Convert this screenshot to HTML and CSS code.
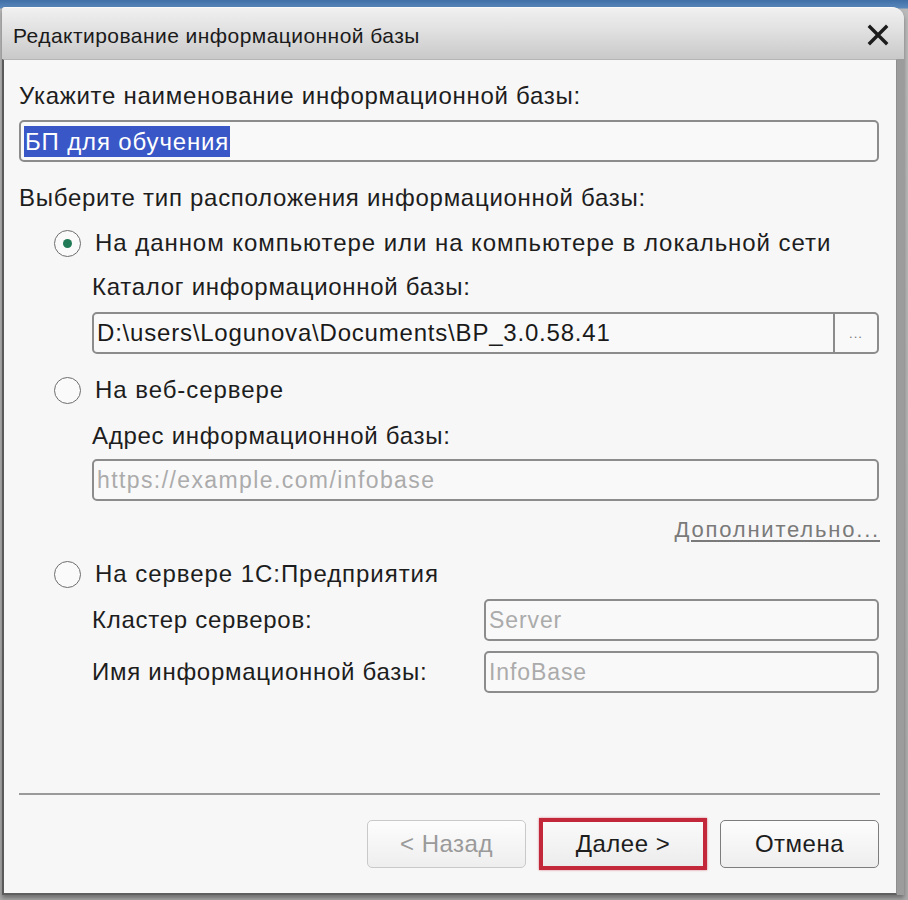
FILE: index.html
```html
<!DOCTYPE html>
<html lang="ru">
<head>
<meta charset="utf-8">
<title>Редактирование информационной базы</title>
<link rel="stylesheet" href="styles.css">
</head>
<body>
<div class="desktop">
  <div class="window">
    <div class="titlebar">
      <span class="title">Редактирование информационной базы</span>
      <svg class="close" width="22" height="22" viewBox="0 0 22 22"><path d="M3 3 L19 19 M19 3 L3 19" stroke="#1c1c1c" stroke-width="3.4" stroke-linecap="square"/></svg>
    </div>
    <div class="frame">
      <div class="content">
        <div class="label l1">Укажите наименование информационной базы:</div>
        <div class="field f1"><span class="sel">БП для обучения</span></div>
        <div class="label l2">Выберите тип расположения информационной базы:</div>

        <div class="radio r1"><span class="dot checked"></span><span class="rtext">На данном компьютере или на компьютере в локальной сети</span></div>
        <div class="sub">
          <div class="label l3">Каталог информационной базы:</div>
          <div class="field f2"><span class="value">D:\users\Logunova\Documents\BP_3.0.58.41</span><span class="choose">...</span></div>
        </div>

        <div class="radio r2"><span class="dot"></span><span class="rtext">На веб-сервере</span></div>
        <div class="sub">
          <div class="label l4">Адрес информационной базы:</div>
          <div class="field f3"><span class="ph">https://example.com/infobase</span></div>
          <div class="more"><span class="link">Дополнительно...</span></div>
        </div>

        <div class="radio r3"><span class="dot"></span><span class="rtext">На сервере 1С:Предприятия</span></div>
        <div class="sub grid">
          <div class="label">Кластер серверов:</div>
          <div class="field small"><span class="ph">Server</span></div>
          <div class="label">Имя информационной базы:</div>
          <div class="field small"><span class="ph">InfoBase</span></div>
        </div>

        <div class="footer">
          <div class="sep"></div>
          <div class="buttons">
            <div class="btn disabled">&lt; Назад</div>
            <div class="btn primary">Далее &gt;</div>
            <div class="btn">Отмена</div>
          </div>
        </div>
      </div>
    </div>
  </div>
</div>
</body>
</html>
```
FILE: styles.css
```css
html, body {
  margin: 0;
  padding: 0;
}
body {
  width: 908px;
  height: 900px;
  overflow: hidden;
  font-family: "Liberation Sans", Arial, sans-serif;
}
.desktop {
  width: 908px;
  height: 900px;
  background: linear-gradient(#3f6fa6 0, #5a88bd 8px, #b9b9b9 9px, #a9a9a9 100%);
  padding-top: 7px;
  box-sizing: border-box;
}
.window {
  margin-left: 2px;
  width: 902px;
  height: 888px;
  display: flex;
  flex-direction: column;
  border-radius: 3px 12px 0 0;
  background: #a6a6a6;
  box-shadow: 0 3px 4px rgba(0,0,0,0.35);
}
.titlebar {
  height: 51px;
  flex: none;
  display: flex;
  align-items: center;
  justify-content: space-between;
  padding: 0 15px 0 11px;
  border-radius: 3px 12px 0 0;
  background: linear-gradient(#f0f0f0 0%, #e2e2e2 40%, #c9c9c9 100%);
  border-top: 1px solid #fafafa;
}
.title {
  font-family: "Liberation Sans", Arial, sans-serif;
  font-size: 21px;
  color: #1a1a1a;
  letter-spacing: 0.45px;
  margin-top: 5px;
}
.close {
  display: block;
  margin-top: 2px;
}
.frame {
  flex: 1;
  display: flex;
  padding: 0 7px 0 0;
  background: linear-gradient(90deg, #c2c2c2, #9c9c9c);
}
.content {
  flex: 1;
  display: flex;
  flex-direction: column;
  background: #f7f7f7;
  border-left: 2px solid #5a5a5a;
  border-bottom: 2px solid #5f5f5f;
  border-right: 1px solid #8e8e8e;
  border-top: 1px solid #b5b5b5;
  padding: 21px 17px 23px 15px;
  color: #1d1d1d;
}
.label {
  font-size: 24px;
  line-height: 30px;
  height: 30px;
  letter-spacing: 0.72px;
  white-space: nowrap;
}
.field {
  height: 42px;
  box-sizing: border-box;
  border: 2px solid #8c8c8c;
  border-radius: 5px;
  background: #f9f9f9;
  display: flex;
  align-items: center;
  padding-left: 3px;
  font-size: 24px;
  white-space: nowrap;
}
.f1 { margin-top: 9px; }
.sel {
  background: #3957c6;
  color: #fff;
  padding: 0 1px;
  line-height: 31px;
  letter-spacing: 0.85px;
}
.l2 { margin-top: 21px; }
.radio {
  display: flex;
  align-items: center;
  height: 30px;
  padding-left: 35px;
}
.r1 { margin-top: 15px; }
.r2 { margin-top: 21px; }
.r3 { margin-top: 14px; }
.dot {
  width: 27px;
  height: 27px;
  box-sizing: border-box;
  border: 1.5px solid #6d6d6d;
  border-radius: 50%;
  background: #fafafa;
  display: flex;
  align-items: center;
  justify-content: center;
  flex: none;
}
.dot.checked::after {
  content: "";
  width: 9px;
  height: 9px;
  border-radius: 50%;
  background: #1f7a55;
}
.rtext {
  margin-left: 14px;
  font-size: 24px;
  letter-spacing: 0.95px;
  white-space: nowrap;
}
.sub {
  padding-left: 73px;
  display: flex;
  flex-direction: column;
}
.l3 { margin-top: 14px; }
.f2 {
  margin-top: 10px;
  padding-right: 0;
  justify-content: space-between;
}
.value {
  color: #1a1a1a;
  letter-spacing: 0.8px;
  font-size: 24px;
}
.choose {
  width: 42px;
  height: 38px;
  border-left: 2px solid #8c8c8c;
  display: flex;
  align-items: center;
  justify-content: center;
  font-size: 13px;
  color: #777;
  letter-spacing: 1px;
}
.l4 { margin-top: 16px; }
.f3 { margin-top: 8px; }
.ph {
  color: #ababab;
  font-size: 23px;
  letter-spacing: 1.4px;
}
.small .ph {
  letter-spacing: 0.9px;
}
.more {
  display: flex;
  justify-content: flex-end;
  height: 30px;
  margin-top: 14px;
}
.link {
  font-size: 22px;
  line-height: 30px;
  color: #7a7a7a;
  text-decoration: underline;
  text-underline-offset: 3px;
  letter-spacing: 1.8px;
  margin-right: -1px;
}
.grid {
  display: grid;
  grid-template-columns: 392px 1fr;
  row-gap: 10px;
  align-items: center;
  margin-top: 10px;
}
.footer {
  margin-top: auto;
  display: flex;
  flex-direction: column;
}
.sep {
  height: 2px;
  background: #9a9a9a;
  margin-right: -1px;
}
.buttons {
  margin-top: 23px;
  display: flex;
  justify-content: flex-end;
  align-items: center;
  gap: 13px;
}
.btn {
  width: 159px;
  height: 48px;
  box-sizing: border-box;
  border: 1.5px solid #7d7d7d;
  border-radius: 5px;
  background: linear-gradient(#fdfdfd, #eeeeee);
  display: flex;
  align-items: center;
  justify-content: center;
  font-size: 24px;
  letter-spacing: 0.5px;
  color: #1d1d1d;
}
.btn.disabled {
  border-color: #c9c9c9;
  color: #9a9a9a;
}
.btn.primary {
  width: 168px;
  height: 52px;
  border: 4px solid #c2283a;
  border-radius: 0;
  background: linear-gradient(#fafafa, #ececec);
  box-shadow: 0 0 2px rgba(194,40,58,0.6);
}
```
